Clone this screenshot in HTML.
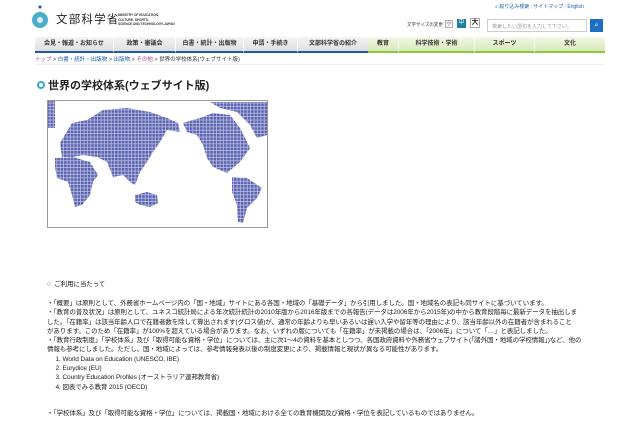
<!DOCTYPE html>
<html><head><meta charset="utf-8"><style>
*{margin:0;padding:0;box-sizing:border-box}
body{width:640px;height:426px;background:#fff;font-family:"Liberation Sans","Noto Sans CJK JP",sans-serif;color:#333;position:relative;overflow:hidden}
.a{position:absolute;white-space:nowrap}
.nav{position:absolute;left:35px;top:37px;width:570px;height:16px;background:linear-gradient(#f4f4f4,#dcdcdc)}
.nav div{position:absolute;top:0;height:16px;font-size:6px;font-weight:bold;line-height:14px;text-align:center;color:#333}
.b{border-bottom:2px solid #1d5c9e}
.g{border-bottom:2px solid #8cc63f;background:linear-gradient(#f2f8e6,#d8e9b8)}
.t{font-size:6.5px;color:#222;line-height:9.3px;letter-spacing:-0.1px}
</style></head><body>
<svg class="a" style="left:31px;top:4px" width="20" height="26"><circle cx="9" cy="3" r="1.5" fill="#1a4f8f"/><circle cx="9" cy="16" r="8" fill="#4aaecb"/><circle cx="9" cy="16" r="3" fill="#d7f0f6"/></svg>
<div class="a" style="left:56px;top:11px;font-size:11.5px;letter-spacing:1.2px;color:#222">文部科学省</div>
<div class="a" style="left:118px;top:13px;font-size:3.2px;line-height:4.5px;color:#333;font-weight:bold">MINISTRY OF EDUCATION,<br>CULTURE, SPORTS,<br>SCIENCE AND TECHNOLOGY-JAPAN</div>
<div class="a" style="left:495px;top:3px;font-size:5px;color:#1a5fa8">⌕ 絞り込み検索 <span style="color:#ccc">|</span> サイトマップ <span style="color:#ccc">|</span> English</div>
<div class="a" style="left:407px;top:22px;font-size:4.5px;color:#333">文字サイズの変更</div>
<div class="a" style="left:445px;top:20px;width:8px;height:8px;border:1px solid #aaa;font-size:5px;text-align:center;line-height:6px">小</div>
<div class="a" style="left:457px;top:19px;width:9px;height:9px;background:#1a7fa0;color:#fff;font-size:6px;text-align:center;line-height:9px">中</div>
<div class="a" style="left:470px;top:18px;width:10px;height:10px;border:1px solid #aaa;font-size:7px;text-align:center;line-height:8px;font-weight:bold">大</div>
<div class="a" style="left:487px;top:19px;width:100px;height:13px;border:1px solid #ccc;font-size:5px;color:#999;padding:3px 4px">検索したい語句を入力して下さい。</div>
<div class="a" style="left:590px;top:19px;width:13px;height:13px;background:#1e6fc4;color:#fff;font-size:7px;text-align:center;line-height:13px">⌕</div>
<div class="nav">
<div class="b" style="left:0;width:78px">会見・報道・お知らせ</div>
<div class="b" style="left:78px;width:62px;border-left:1px solid #fff">政策・審議会</div>
<div class="b" style="left:140px;width:68px;border-left:1px solid #fff">白書・統計・出版物</div>
<div class="b" style="left:208px;width:54px;border-left:1px solid #fff">申請・手続き</div>
<div class="b" style="left:262px;width:71px;border-left:1px solid #fff">文部科学省の紹介</div>
<div class="g" style="left:333px;width:30px">教育</div>
<div class="g" style="left:363px;width:76px;border-left:1px solid #fff">科学技術・学術</div>
<div class="g" style="left:439px;width:60px;border-left:1px solid #fff">スポーツ</div>
<div class="g" style="left:499px;width:71px;border-left:1px solid #fff">文化</div>
</div>
<div class="a" style="left:35px;top:55px;font-size:5.5px;color:#333"><span style="color:#a03a9a">トップ</span> &gt; <span style="color:#1a5fa8">白書・統計・出版物</span> &gt; <span style="color:#1a5fa8">出版物</span> &gt; <span style="color:#a03a9a">その他</span> &gt; 世界の学校体系(ウェブサイト版)</div>
<div class="a" style="left:35px;top:64px;width:570px;border-top:1px solid #eee"></div>
<div class="a" style="left:37px;top:81px;width:8px;height:8px;border-radius:50%;border:2.5px solid #38a9d6;background:#fff"></div>
<div class="a" style="left:48px;top:77px;font-size:11px;font-weight:bold;color:#222">世界の学校体系(ウェブサイト版)</div>
<svg class="a" style="left:47px;top:100px" width="221" height="128" viewBox="0 0 221 128">
<defs><pattern id="p" width="3.4" height="3.4" patternUnits="userSpaceOnUse"><rect width="3.4" height="3.4" fill="#5a63b0"/><rect x="2.7" width="0.7" height="3.4" fill="#c8cbe8"/><rect y="2.7" width="3.4" height="0.7" fill="#c8cbe8"/></pattern></defs>
<rect x="0.5" y="0.5" width="220" height="127" fill="#fff" stroke="#999"/>
<g fill="url(#p)">
<path d="M1 1 L8 1 L8 28 L1 28 Z"/>
<path d="M13 43 L25 23 L40 20 L56 10 L80 8 L103 12 L120 18 L131 23 L133 32 L120 30 L113 42 L106 52 L100 62 L93 72 L88 85 L83 82 L76 75 L66 77 L60 62 L50 57 L36 55 L26 57 L15 57 Z"/>
<path d="M8 58 L26 57 L43 62 L51 75 L46 82 L43 95 L35 105 L28 107 L25 95 L21 82 L10 78 L8 67 Z"/>
<path d="M88 95 L100 92 L110 95 L111 103 L103 107 L93 105 L88 102 Z"/>
<path d="M136 23 L153 18 L166 13 L183 15 L193 28 L203 48 L193 62 L186 68 L180 73 L166 67 L160 58 L156 45 L150 35 L140 32 Z"/>
<path d="M163 2 L220 2 L220 35 L210 38 L203 25 L190 12 L173 8 Z"/>
<path d="M185 77 L200 78 L215 88 L210 98 L200 108 L196 123 L191 122 L190 105 L185 92 Z"/>
</g></svg>
<div class="a t" style="left:47px;top:280px">○&nbsp; ご利用に当たって</div>
<div class="a t" style="left:47px;top:299px">・「概要」は原則として、外務省ホームページ内の「国・地域」サイトにある各国・地域の「基礎データ」から引用しました。国・地域名の表記も同サイトに基づいています。<br>・「教育の普及状況」は原則として、ユネスコ統計局による年次統計統計の2010年版から2016年版までの各報告(データは2006年から2015年)の中から教育段階毎に最新データを抽出しま<br>した。「在籍率」は該当年齢人口で在籍者数を除して算出されます(グロス値)が、通常の年齢よりも早いあるいは遅い入学や留年等の理由により、該当年齢以外の在籍者が含まれること<br>があります。このため「在籍率」が100%を超えている場合があります。なお、いずれの版についても「在籍率」が未掲載の場合は、「2006年」について「…」と表記しました。<br>・「教育行政制度」「学校体系」及び「取得可能な資格・学位」については、主に次1～4の資料を基本としつつ、各国政府資料や外務省ウェブサイト(「諸外国・地域の学校情報」)など、他の<br>情報も参考にしました。ただし、国・地域によっては、参考情報発表以後の制度変更により、掲載情報と現状が異なる可能性があります。<br>&nbsp;&nbsp;&nbsp;&nbsp;&nbsp;1. World Data on Education (UNESCO, IBE)<br>&nbsp;&nbsp;&nbsp;&nbsp;&nbsp;2. Eurydice (EU)<br>&nbsp;&nbsp;&nbsp;&nbsp;&nbsp;3. Country Education Profiles (オーストラリア連邦教育省)<br>&nbsp;&nbsp;&nbsp;&nbsp;&nbsp;4. 図表でみる教育 2015 (OECD)</div>
<div class="a t" style="left:47px;top:409px">・「学校体系」及び「取得可能な資格・学位」については、掲載国・地域における全ての教育機関及び資格・学位を表記しているものではありません。</div>
</body></html>
